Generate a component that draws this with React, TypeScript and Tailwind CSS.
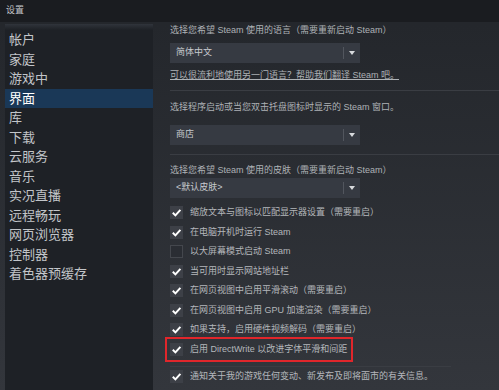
import React from "react";

const nav = ["帐户", "家庭", "游戏中", "界面", "库", "下载", "云服务", "音乐", "实况直播", "远程畅玩", "网页浏览器", "控制器", "着色器预缓存"];

const checks: [string, boolean][] = [
  ["缩放文本与图标以匹配显示器设置（需要重启）", true],
  ["在电脑开机时运行 Steam", true],
  ["以大屏幕模式启动 Steam", false],
  ["当可用时显示网站地址栏", true],
  ["在网页视图中启用平滑滚动（需要重启）", true],
  ["在网页视图中启用 GPU 加速渲染（需要重启）", true],
  ["如果支持，启用硬件视频解码（需要重启）", true],
  ["启用 DirectWrite 以改进字体平滑和间距", true],
];

function Dropdown({ text }: { text: string }) {
  return (
    <div className="w-[190px] h-[20px] bg-[#363a42] flex items-center">
      <div className="flex-1 pl-[6px] text-[9px] text-[#c8cbcf]">{text}</div>
      <div className="w-px h-[12px] bg-[#52565e]" />
      <div className="w-[16px] flex items-center justify-center">
        <svg width="6" height="4" viewBox="0 0 6 4">
          <path d="M0 0h6L3 4z" fill="#d8dadd" />
        </svg>
      </div>
    </div>
  );
}

function Check({ on }: { on: boolean }) {
  return (
    <div className={"w-[13px] h-[13px] flex items-center justify-center " + (on ? "bg-[#3d4047]" : "bg-[#2a2d33] border border-[#44474d]")}>
      {on && (
        <svg width="11" height="11" viewBox="0 0 11 11">
          <path d="M1.8 5.8l2.6 2.6 5-5.6" stroke="#ffffff" strokeWidth="2" fill="none" />
        </svg>
      )}
    </div>
  );
}

function Row({ text, on, boxed }: { text: string; on: boolean; boxed?: boolean }) {
  return (
    <div className="relative h-[19.5px] flex items-center">
      <Check on={on} />
      <div className="ml-[7px] text-[9px] text-[#b4b7bb] whitespace-nowrap">{text}</div>
      {boxed && <div className="absolute top-[-3px] left-[-5px] w-[188px] h-[25px] border-2 border-[#e0262b]" />}
    </div>
  );
}

export default function App() {
  return (
    <div
      className="w-[499px] h-[390px] overflow-hidden flex flex-col bg-gradient-to-b from-[#23262b] to-[#33363c]"
      style={{ fontFamily: '"Liberation Sans", "Noto Sans CJK SC", sans-serif' }}
    >
      <div className="h-[22px] shrink-0 bg-[#1a1c20] pl-[6px] flex items-center text-[9px] text-[#c3c6ca]">设置</div>
      <div className="flex flex-1 min-h-0">
        <div className="w-[148px] ml-[5px] mt-[2px] bg-[#1e2126] flex flex-col shrink-0">
          <div className="h-[6px] bg-gradient-to-b from-[#30343b] to-[#1e2126]" />
          {nav.map((n) => (
            <div
              key={n}
              className={"h-[19.5px] flex items-center pl-[4px] text-[13px] " + (n === "界面" ? "bg-[#1a3857] text-[#ffffff]" : "text-[#c2c5c9]")}
            >
              {n}
            </div>
          ))}
        </div>
        <div className="flex-1 pl-[17px] pt-[2px] flex flex-col">
          <div className="h-[12px] leading-[12px] text-[9px] text-[#aeb2b6] whitespace-nowrap">选择您希望 Steam 使用的语言（需要重新启动 Steam）</div>
          <div className="mt-[7px]"><Dropdown text="简体中文" /></div>
          <div className="mt-[6px] h-[12px] leading-[12px] text-[9px] text-[#aeb2b6] underline whitespace-nowrap">可以很流利地使用另一门语言？帮助我们翻译 Steam 吧。</div>
          <div className="mt-[9px] h-px bg-[#3a3d43]" />
          <div className="mt-[10px] h-[12px] leading-[12px] text-[9px] text-[#aeb2b6] whitespace-nowrap">选择程序启动或当您双击托盘图标时显示的 Steam 窗口。</div>
          <div className="mt-[12px]"><Dropdown text="商店" /></div>
          <div className="mt-[9px] h-px bg-[#3a3d43]" />
          <div className="mt-[9px] h-[12px] leading-[12px] text-[9px] text-[#aeb2b6] whitespace-nowrap">选择您希望 Steam 使用的皮肤（需要重新启动 Steam）</div>
          <div className="mt-[2px]"><Dropdown text="<默认皮肤>" /></div>
          <div className="mt-[5px] flex flex-col">
            {checks.map(([t, on], i) => (
              <Row key={t} text={t} on={on} boxed={i === 7} />
            ))}
          </div>
          <div className="mt-[7px] h-px bg-[#3a3d43] mr-[48px]" />
          <Row text="通知关于我的游戏任何变动、新发布及即将面市的有关信息。" on={true} />
        </div>
      </div>
    </div>
  );
}
